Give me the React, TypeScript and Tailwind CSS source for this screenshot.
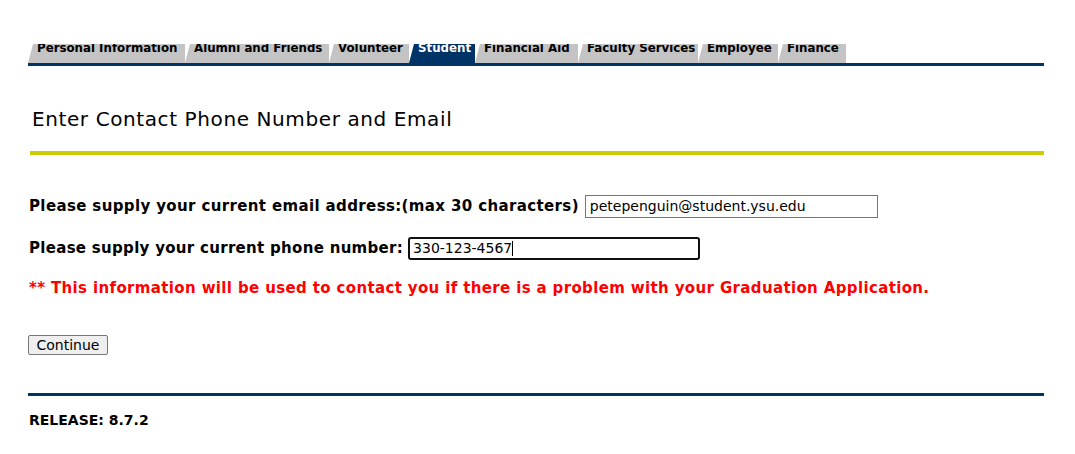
import React from "react";

const tabs = [
  { label: "Personal Information", w: 157, active: false },
  { label: "Alumni and Friends", w: 144, active: false },
  { label: "Volunteer", w: 80, active: false },
  { label: "Student", w: 66, active: true },
  { label: "Financial Aid", w: 103, active: false },
  { label: "Faculty Services", w: 120, active: false },
  { label: "Employee", w: 80, active: false },
  { label: "Finance", w: 68, active: false },
];

export default function App() {
  return (
    <div
      className="w-[1075px] h-[454px] bg-white text-black overflow-hidden"
      style={{ fontFamily: "'DejaVu Sans', Verdana, sans-serif" }}
    >
      <div className="ml-[28px] w-[1016px] pt-[44px]">
        <div className="flex h-[19px] items-end">
          {tabs.map((t) => (
            <div
              key={t.label}
              className={`h-[19px] overflow-hidden shrink-0 [clip-path:polygon(0_100%,5px_0,100%_0,100%_100%)] ${
                t.active ? "bg-[#003366] text-white" : "bg-[#c4c4c4] text-black"
              }`}
              style={{ width: t.w }}
            >
              <div className="pl-[9px] -mt-[2px] leading-[12px] text-[11.8px] font-bold whitespace-nowrap">
                {t.label}
              </div>
            </div>
          ))}
        </div>
        <div className="h-[3px] bg-[#003366]" />
      </div>

      <div className="ml-[32px] mt-[41px] text-[20px] leading-[24px] tracking-[0.6px]">
        Enter Contact Phone Number and Email
      </div>
      <div className="ml-[30px] w-[1014px] mt-[20px] h-[4px] bg-[#cccc00]" />

      <div className="ml-[29px] mt-[40px]">
        <div className="flex items-center h-[23px]">
          <span className="text-[15px] font-bold tracking-[0.37px]">
            Please supply your current email address:(max 30 characters)
          </span>
          <div className="ml-[6px] w-[293px] h-[23px] border border-[#767676] flex items-center px-[4px] text-[14px]">
            petepenguin@student.ysu.edu
          </div>
        </div>
        <div className="flex items-center h-[23px] mt-[19px]">
          <span className="text-[15px] font-bold tracking-[0.3px]">
            Please supply your current phone number:
          </span>
          <div className="ml-[5px] w-[292px] h-[23px] border-2 border-[#101010] rounded-[3px] flex items-center px-[3px] text-[14px]">
            330-123-4567
            <span className="inline-block w-[1px] h-[15px] bg-black" />
          </div>
        </div>
        <div className="mt-[20px] text-[15px] leading-[17px] font-bold tracking-[0.36px] text-[#ff0000] whitespace-nowrap">
          ** This information will be used to contact you if there is a problem with your Graduation Application.
        </div>
      </div>

      <div className="ml-[28px] mt-[38px] flex">
        <div className="flex items-center justify-center w-[80px] h-[20px] bg-[#efefef] border border-[#767676] rounded-[2px] text-[14px]">
          Continue
        </div>
      </div>

      <div className="ml-[28px] w-[1016px] mt-[38px] h-[3px] bg-[#003366]" />
      <div className="ml-[29px] mt-[16px] text-[14px] leading-[16px] font-bold">
        RELEASE: 8.7.2
      </div>
    </div>
  );
}
